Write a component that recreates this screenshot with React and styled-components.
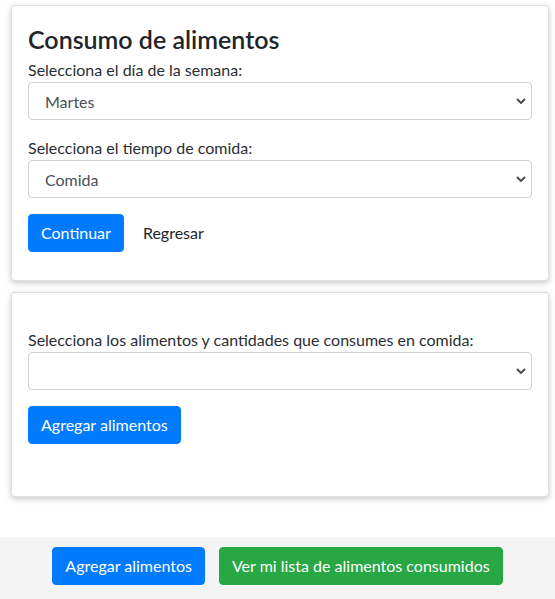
import React, { useState } from 'react'
import styled, { createGlobalStyle } from 'styled-components'

const Global = createGlobalStyle`
  body {
    margin: 0;
    font-family: Lato, "Liberation Sans", sans-serif;
    font-size: 16px;
    color: #212529;
    background: #fff;
  }
`

const chevron =
  "url(\"data:image/svg+xml,%3Csvg xmlns='http://www.w3.org/2000/svg' width='10' height='6' viewBox='0 0 10 6'%3E%3Cpath d='M1 1l4 4 4-4' fill='none' stroke='%23444' stroke-width='1.8'/%3E%3C/svg%3E\")"

const Page = styled.div`
  display: flex;
  flex-direction: column;
  min-height: 599px;
`

const Card = styled.section`
  margin: ${p => (p.first ? '5px 6px 0 11px' : '11px 6px 0 11px')};
  background: #fff;
  border: 1px solid rgba(0, 0, 0, 0.125);
  border-radius: 4px;
  box-shadow: 0 2px 6px rgba(0, 0, 0, 0.22);
  padding: ${p => p.pad};
  display: flex;
  flex-direction: column;
`

const Title = styled.h3`
  margin: 0 0 2px;
  font-size: 25px;
  font-weight: 600;
  line-height: 34px;
  color: #212529;
`

const Group = styled.div`
  display: flex;
  flex-direction: column;
  margin-bottom: 16px;
`

const Label = styled.label`
  line-height: 24px;
  font-size: 16px;
  color: #2a2e33;
`

const Select = styled.select`
  appearance: none;
  height: 38px;
  width: 100%;
  box-sizing: border-box;
  padding: 0 30px 0 16px;
  border: 1px solid #ced4da;
  border-radius: 4px;
  background: #fff ${chevron} no-repeat right 5px center;
  font-family: inherit;
  font-size: 16px;
  color: #495057;
`

const Actions = styled.div`
  display: flex;
  gap: ${p => p.gap || 6}px;
  justify-content: ${p => p.center ? 'center' : 'flex-start'};
`

const Button = styled.button`
  height: 38px;
  padding: 0 12px;
  border: 1px solid ${p => p.bg || 'transparent'};
  border-radius: 4px;
  background: ${p => p.bg || 'transparent'};
  color: ${p => (p.bg ? '#fff' : '#212529')};
  font-family: inherit;
  font-size: 16px;
  line-height: 24px;
  cursor: pointer;
`

const Footer = styled.footer`
  margin-top: auto;
  background: #f4f4f4;
  padding: 10px 0 14px;
`

const dias = ['Lunes', 'Martes', 'Miércoles', 'Jueves', 'Viernes', 'Sábado', 'Domingo']
const tiempos = ['Desayuno', 'Colación', 'Comida', 'Cena']

export default function App() {
  const [dia, setDia] = useState('Martes')
  const [tiempo, setTiempo] = useState('Comida')

  return (
    <Page>
      <Global />
      <Card first pad="16px 16px 28px">
        <Title>Consumo de alimentos</Title>
        <Group>
          <Label>Selecciona el día de la semana:</Label>
          <Select value={dia} onChange={e => setDia(e.target.value)}>
            {dias.map(d => <option key={d}>{d}</option>)}
          </Select>
        </Group>
        <Group>
          <Label>Selecciona el tiempo de comida:</Label>
          <Select value={tiempo} onChange={e => setTiempo(e.target.value)}>
            {tiempos.map(t => <option key={t}>{t}</option>)}
          </Select>
        </Group>
        <Actions>
          <Button bg="#007bff">Continuar</Button>
          <Button>Regresar</Button>
        </Actions>
      </Card>

      <Card pad="35px 16px 52px">
        <Group>
          <Label>Selecciona los alimentos y cantidades que consumes en {tiempo.toLowerCase()}:</Label>
          <Select defaultValue="">
            <option value=""></option>
          </Select>
        </Group>
        <Actions>
          <Button bg="#007bff">Agregar alimentos</Button>
        </Actions>
      </Card>

      <Footer>
        <Actions center gap={14}>
          <Button bg="#007bff">Agregar alimentos</Button>
          <Button bg="#28a745">Ver mi lista de alimentos consumidos</Button>
        </Actions>
      </Footer>
    </Page>
  )
}
